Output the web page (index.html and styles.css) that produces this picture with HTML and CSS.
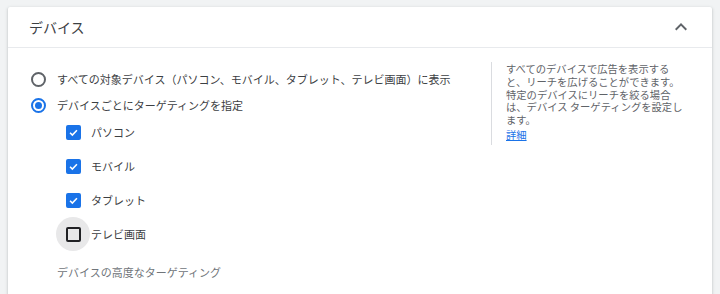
FILE: index.html
```html
<!DOCTYPE html>
<html lang="ja">
<head>
    <meta charset="UTF-8" />
    <meta name="viewport" content="width=device-width, initial-scale=1.0" />
    <title>デバイス</title>
    <link rel="stylesheet" href="styles.css">
</head>
<body>
    <div class="card">
        <div class="card-header">
            <div class="title">デバイス</div>
            <svg class="chevron" width="24" height="24" viewBox="0 0 24 24">
                <path d="M12 8l-6 6 1.41 1.41L12 10.83l4.59 4.58L18 14z" />
            </svg>
        </div>

        <div class="card-body">
            <div class="options">
                <div class="radio-row">
                    <span class="radio"></span>
                    <span class="label">すべての対象デバイス（パソコン、モバイル、タブレット、テレビ画面）に表示</span>
                </div>
                <div class="radio-row">
                    <span class="radio checked"></span>
                    <span class="label">デバイスごとにターゲティングを指定</span>
                </div>

                <div class="check-list">
                    <div class="check-row">
                        <span class="check-hit"><span class="checkbox checked"><svg viewBox="0 0 24 24"><polyline points="4.5,12.5 9.5,17.5 19.5,7" /></svg></span></span>
                        <span class="label">パソコン</span>
                    </div>
                    <div class="check-row">
                        <span class="check-hit"><span class="checkbox checked"><svg viewBox="0 0 24 24"><polyline points="4.5,12.5 9.5,17.5 19.5,7" /></svg></span></span>
                        <span class="label">モバイル</span>
                    </div>
                    <div class="check-row">
                        <span class="check-hit"><span class="checkbox checked"><svg viewBox="0 0 24 24"><polyline points="4.5,12.5 9.5,17.5 19.5,7" /></svg></span></span>
                        <span class="label">タブレット</span>
                    </div>
                    <div class="check-row">
                        <span class="check-hit hover"><span class="checkbox"></span></span>
                        <span class="label">テレビ画面</span>
                    </div>
                </div>

                <div class="advanced">デバイスの高度なターゲティング</div>
            </div>

            <div class="help">
                <div class="help-text">すべてのデバイスで広告を表示すると、リーチを広げることができます。特定のデバイスにリーチを絞る場合は、デバイス ターゲティングを設定します。</div>
                <a class="help-link" href="#">詳細</a>
            </div>
        </div>
    </div>
</body>
</html>
```

FILE: styles.css
```css
body {
    font-family: "Noto Sans CJK JP", "Noto Sans", sans-serif;
    background: #f1f3f4;
    color: #3c4043;
    margin: 0;
    padding: 7px 8px 0 8px;
}

.card {
    background: #fff;
    border-radius: 2px;
    box-shadow: 0 1px 2px rgba(60, 64, 67, 0.2), 0 1px 3px 1px rgba(60, 64, 67, 0.1);
    min-height: 300px;
}

.card-header {
    display: flex;
    align-items: center;
    justify-content: space-between;
    height: 40px;
    padding: 0 19px 0 21px;
    border-bottom: 1px solid #e8eaed;
}

.title {
    font-size: 14px;
    color: #3c4043;
}

.chevron {
    fill: #5f6368;
}

.card-body {
    display: flex;
    padding-top: 14px;
}

.options {
    flex: 1;
    padding: 4px 0 0 23px;
    font-size: 11px;
}

.radio-row {
    display: flex;
    align-items: center;
    height: 26px;
}

.radio {
    box-sizing: border-box;
    width: 15px;
    height: 15px;
    border: 2px solid #5f6368;
    border-radius: 50%;
    margin-right: 11px;
    display: flex;
    align-items: center;
    justify-content: center;
}

    .radio.checked {
        border-color: #1a73e8;
    }

    .radio.checked::after {
        content: "";
        width: 7px;
        height: 7px;
        border-radius: 50%;
        background: #1a73e8;
    }

.check-list {
    margin: -3px 0 0 25px;
}

.check-row {
    display: flex;
    align-items: center;
    height: 34px;
}

.check-hit {
    width: 34px;
    height: 34px;
    border-radius: 50%;
    display: flex;
    align-items: center;
    justify-content: center;
    margin-right: 1px;
}

    .check-hit.hover {
        background: #e8e8e9;
    }

.checkbox {
    box-sizing: border-box;
    width: 15px;
    height: 15px;
    border: 2px solid #202124;
    border-radius: 2px;
    display: flex;
}

    .checkbox.checked {
        background: #1a73e8;
        border-color: #1a73e8;
    }

    .checkbox svg {
        width: 100%;
        height: 100%;
        fill: none;
        stroke: #fff;
        stroke-width: 3.4;
    }

.advanced {
    margin: 13px 0 0 26px;
    line-height: 16px;
    color: #70757a;
}

.help {
    align-self: flex-start;
    width: 178px;
    padding: 1px 28px 3px 14px;
    border-left: 1px solid #dadce0;
    font-size: 10.3px;
    line-height: 12.75px;
    color: #5f6368;
}

.help-link {
    display: block;
    margin-top: 2.5px;
    color: #1a73e8;
}
```
